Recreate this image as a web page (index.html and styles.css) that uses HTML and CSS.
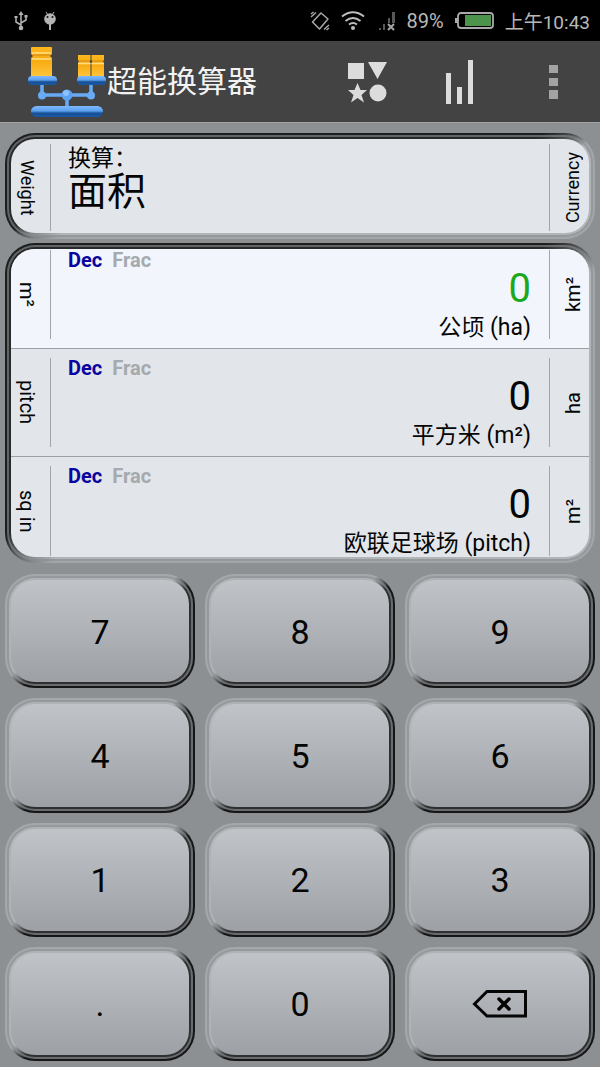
FILE: index.html
```html
<!DOCTYPE html>
<html lang="zh-CN">
<head>
<meta charset="utf-8">
<meta name="viewport" content="width=device-width, initial-scale=1">
<title>超能换算器</title>
<link rel="stylesheet" href="styles.css">
</head>
<body>
<div class="status">
  <svg width="14" height="20" viewBox="0 0 14 20" fill="none" stroke="#b4b4b4" stroke-width="1.500"><path d="M7 16V3M7 14L2 11V6M7 12l5-3V5"/><path d="M4.500 4L7 0l2.500 4z" fill="#b4b4b4" stroke="none"/><circle cx="7" cy="17" r="2.300" fill="#b4b4b4" stroke="none"/><path d="M.5 5h3v2h-3zM10.500 4h3v2.500h-3z" fill="#b4b4b4" stroke="none"/></svg>
  <svg class="debug" width="14" height="20" viewBox="0 0 14 20"><path d="M3 1l2 3M11 1L9 4" stroke="#b4b4b4"/><circle cx="7" cy="8" r="5.800" fill="#b4b4b4"/><path d="M6 13h2v6H6z" fill="#b4b4b4"/><circle cx="4.500" cy="6" r="1" fill="#111"/><circle cx="9.500" cy="6" r="1" fill="#111"/></svg>
  <span class="spacer"></span>
  <svg width="20" height="20" viewBox="0 0 20 20" fill="none" stroke="#a8a8a8" stroke-width="1.500"><path d="M11 2l7 6-8.500 10-7-7z" stroke-linejoin="round"/><path d="M1 6l5-4.500M1 3l2.500-2M14 18.500l5-4.500M16.500 19l2.500-2"/></svg>
  <svg class="wifi" width="24" height="20" viewBox="0 0 24 20" fill="none" stroke="#bdbdbd" stroke-width="2"><path d="M1 5.500Q12-3 23 5.500M4.500 10q7.500-6 15 0M8 13.500q4-3 8 0"/><circle cx="12" cy="17" r="2" fill="#bdbdbd" stroke="none"/></svg>
  <svg class="signal" width="18" height="20" viewBox="0 0 18 20"><path d="M1 17h2v2H1zM5 13h2v6H5zM10 7h2v5h-2zM14 1h3v11h-3z" fill="#585858"/><path d="M10 13l6 6M16 13l-6 6" stroke="#a5a5a5" stroke-width="2"/></svg>
  <span class="percent">89%</span>
  <svg class="battery" width="40" height="18" viewBox="0 0 40 18"><rect x="3" y="1" width="35" height="15" rx="3" fill="none" stroke="#aaa" stroke-width="1.800"/><path d="M0 6h3v5H0z" fill="#aaa"/><path d="M10 3h26v11H10z" fill="#4c944b"/></svg>
  <span class="clock">上午10:43</span>
</div>
<header class="bar">
  <svg class="logo" width="80" height="72" viewBox="0 0 80 72">
    <defs>
      <linearGradient id="gold" x2="0" y2="1"><stop offset="0" stop-color="#ffb81e"/><stop offset=".3" stop-color="#f9ad15"/><stop offset=".5" stop-color="#f9ad15"/><stop offset="1" stop-color="#ffc640"/></linearGradient>
      <linearGradient id="blue" x2="0" y2="1"><stop offset="0" stop-color="#7db9ff"/><stop offset=".45" stop-color="#5da0ee"/><stop offset=".65" stop-color="#164f94"/><stop offset="1" stop-color="#1c5aa5"/></linearGradient>
    </defs>
    <path d="M14 35v14h49V35M39 49v15" fill="none" stroke="#69aaf5" stroke-width="3.500"/>
    <path d="M3 2q0-1 1-1h19q1 0 1 1v6l-2 2 2 2v19H3V12l2-2-2-2z" fill="url(#gold)"/>
    <path d="M5 9h17" stroke="#d08a12"/><path d="M4 7h19M4 13h19" stroke="#ffdf85" stroke-width="1.500"/>
    <path d="M50 9h12.500v5l-1 1.500 1 1.500v14H50V17l1-1.500-1-1.500zM63.500 9H76v5l-1 1.500 1 1.500v14H63.500V17l1-1.500-1-1.500z" fill="url(#gold)"/>
    <path d="M51 15h10.500M64.500 15H75" stroke="#d08a12"/><path d="M50 17.500h12.500M63.500 17.500H76" stroke="#ffdf85" stroke-width="1.500"/>
    <rect x="0" y="30" width="29" height="9" rx="4" fill="url(#blue)"/>
    <rect x="49" y="30" width="29" height="9" rx="4" fill="url(#blue)"/>
    <circle cx="14" cy="49.500" r="4" fill="#69aaf5"/><circle cx="63" cy="49.500" r="4" fill="#69aaf5"/>
    <circle cx="39" cy="49" r="5.500" fill="#5da2f2"/><circle cx="38" cy="47" r="3" fill="#8cc1ff"/>
    <rect x="3" y="60" width="72" height="11" rx="5.500" fill="url(#blue)"/>
  </svg>
  <h1 class="title">超能换算器</h1>
  <button class="action" aria-label="类别"><svg width="40" height="41" viewBox="0 0 40 41" fill="#dcdcdc"><path d="M1 1h16v16H1zM21 0h19l-9.500 17zM10.500 21l3 7H20l-5.500 5 2.500 7.500-6.500-4.500L4 40.500 6.500 33 1 28h6.500z"/><circle cx="31" cy="31" r="8.500"/></svg></button>
  <button class="action chart" aria-label="统计"><svg width="28" height="44" viewBox="0 0 28 44" fill="#dcdcdc"><path d="M0 13h5v31H0zM11 27h5v17h-5zM22 0h5v44h-5z"/></svg></button>
  <button class="action more" aria-label="更多"><svg width="10" height="34" viewBox="0 0 10 34" fill="#a3a3a3"><path d="M0 0h9v8H0zM0 13h9v8H0zM0 25h9v9H0z"/></svg></button>
</header>
<main class="main">
  <section class="panel"><div class="inner"><div class="rows">
    <div class="row category">
      <button class="side left narrow"><span>Weight</span></button>
      <div class="heading"><div class="caption">换算：</div><div class="name">面积</div></div>
      <button class="side right narrow"><span>Currency</span></button>
    </div>
  </div></div></section>
  <section class="panel"><div class="inner"><div class="rows">
    <div class="row first">
      <button class="side left"><span>m²</span></button>
      <div class="reading"><div class="modes"><button class="dec">Dec</button><button class="frac">Frac</button></div><output class="value">0</output><div class="unit">公顷 (ha)</div></div>
      <button class="side right"><span>km²</span></button>
    </div>
    <div class="row middle">
      <button class="side left"><span>pitch</span></button>
      <div class="reading"><div class="modes"><button class="dec">Dec</button><button class="frac">Frac</button></div><output class="value">0</output><div class="unit">平方米 (m²)</div></div>
      <button class="side right"><span>ha</span></button>
    </div>
    <div class="row last">
      <button class="side left"><span>sq in</span></button>
      <div class="reading"><div class="modes"><button class="dec">Dec</button><button class="frac">Frac</button></div><output class="value">0</output><div class="unit">欧联足球场 (pitch)</div></div>
      <button class="side right"><span>m²</span></button>
    </div>
  </div></div></section>
  <section class="keypad">
    <button class="key"><span class="face">7</span></button>
    <button class="key"><span class="face">8</span></button>
    <button class="key"><span class="face">9</span></button>
    <button class="key"><span class="face">4</span></button>
    <button class="key"><span class="face">5</span></button>
    <button class="key"><span class="face">6</span></button>
    <button class="key"><span class="face">1</span></button>
    <button class="key"><span class="face">2</span></button>
    <button class="key"><span class="face">3</span></button>
    <button class="key"><span class="face">.</span></button>
    <button class="key"><span class="face">0</span></button>
    <button class="key" aria-label="删除"><span class="face"><svg width="56" height="30" viewBox="0 0 56 30" fill="none" stroke="#050505" stroke-width="3"><path d="M2.500 15L15 2.500h38.500v24.500H15z"/><path d="M27 10l10 10M37 10L27 20" stroke-width="3.500" stroke-linecap="round"/></svg></span></button>
  </section>
</main>
</body>
</html>
```
FILE: styles.css
```css
* { box-sizing: border-box; }
body {
  margin: 0;
  min-height: 100vh;
  display: flex;
  flex-direction: column;
  background: #8d9092;
  color: #050505;
  font-family: Roboto, "Noto Sans CJK SC", sans-serif;
}
button {
  border: 0;
  padding: 0;
  background: none;
  color: inherit;
  font: inherit;
}
svg { display: block; flex: none; }

.status {
  height: 41px;
  display: flex;
  align-items: center;
  padding: 0 10px 0 14px;
  background: #000;
  color: #b8b8b8;
  font-size: 20px;
  white-space: nowrap;
}
.debug { margin-left: 15px; }
.spacer { flex: 1; }
.wifi { margin-left: 11px; }
.signal { margin-left: 13px; }
.percent { margin-left: 11px; }
.battery { margin: 0 10px 0 11px; }
.clock { font-size: 19px; }

.bar {
  padding: 1px 12px 0 28px;
  display: flex;
  align-items: center;
  background: #434343;
  color: #f2f2f2;
}
.title {
  flex: 1;
  margin: 0;
  font-size: 30px;
  font-weight: 400;
  line-height: 40px;
  white-space: nowrap;
}
.action {
  width: 94px;
  height: 80px;
  display: flex;
  align-items: center;
  justify-content: center;
}
.chart { width: 92px; }
.more { width: 82px; padding-left: 14px; }
.logo { margin-right: -1px; }

.main {
  flex: 1;
  display: flex;
  flex-direction: column;
  padding: 10px 5px 6px;
  border-top: 1px solid #a2a4a6;
}

/* Bevelled frames: two lit rings round a rounded face. */
.panel {
  margin-bottom: 4px;
  padding: 2px;
  border: 2px solid transparent;
  border-radius: 30px;
  background:
    linear-gradient(to bottom right, #626466 46%, #96999b 54%) padding-box,
    linear-gradient(to bottom right, #1d1e1f 46%, #a3a6a8 54%) border-box;
}
.inner {
  padding: 2px;
  border-radius: 26px;
  background: linear-gradient(to bottom right, #28292a 46%, #b2b5b8 54%);
}
.rows {
  overflow: hidden;
  border-radius: 24px;
  background: #e2e5ea;
}
.row { display: flex; }
.category { height: 94px; }
.first { background: #f2f6fc; }
.middle, .last { border-top: 1px solid #9c9fa3; }

.side {
  flex: none;
  width: 40px;
  margin: 9px 0;
  display: flex;
  align-items: center;
  justify-content: center;
  font-size: 20px;
}
.side span { writing-mode: vertical-rl; white-space: nowrap; line-height: 24px; }
.left { border-right: 1px solid #a2a5a9; padding-right: 8px; }
.right { border-left: 1px solid #a2a5a9; padding-left: 6px; }
.right span { transform: rotate(180deg); }
.narrow { font-size: 18px; }
.category .side { margin: 5px 0 2px; }
.first .side { margin-top: 1px; }
.last .side { margin-bottom: 1px; }

.heading { flex: 1; padding: 6px 18px 0 17px; }
.caption { font-size: 23px; line-height: 27px; }
.name { font-size: 39px; line-height: 40px; }

.reading {
  flex: 1;
  display: flex;
  flex-direction: column;
  padding: 8px 18px 7px 17px;
}
.first .reading { padding-top: 0; }
.last .reading { padding-bottom: 0; }
.modes {
  display: flex;
  gap: 10px;
  font-size: 20px;
  font-weight: 700;
  line-height: 22px;
}
.dec { color: #0b05a0; }
.frac { color: #a6a9ad; }
.value { font-size: 40px; line-height: 36px; text-align: right; }
.first .value { color: #1ca81c; }
.unit { margin-top: 8px; font-size: 23px; line-height: 26px; text-align: right; }

.keypad {
  flex: 1;
  display: grid;
  grid-template-columns: repeat(3, 1fr);
  grid-auto-rows: 1fr;
  gap: 10px;
  margin-top: 7px;
}
.key {
  display: flex;
  min-height: 60px;
  padding: 2px;
  border: 2px solid transparent;
  border-radius: 30px;
  background:
    linear-gradient(to bottom right, #96999b 46%, #696b6d 54%) padding-box,
    linear-gradient(to bottom right, #a5a8aa 46%, #151617 54%) border-box;
}
.face {
  flex: 1;
  align-self: stretch;
  display: flex;
  align-items: center;
  justify-content: center;
  padding-top: 1px;
  border: 2px solid transparent;
  border-radius: 26px;
  background:
    linear-gradient(#c0c3c7, #9da1a5) padding-box,
    linear-gradient(to bottom right, #b0b3b6 46%, #2e2f30 54%) border-box;
  font-size: 34px;
}
```
